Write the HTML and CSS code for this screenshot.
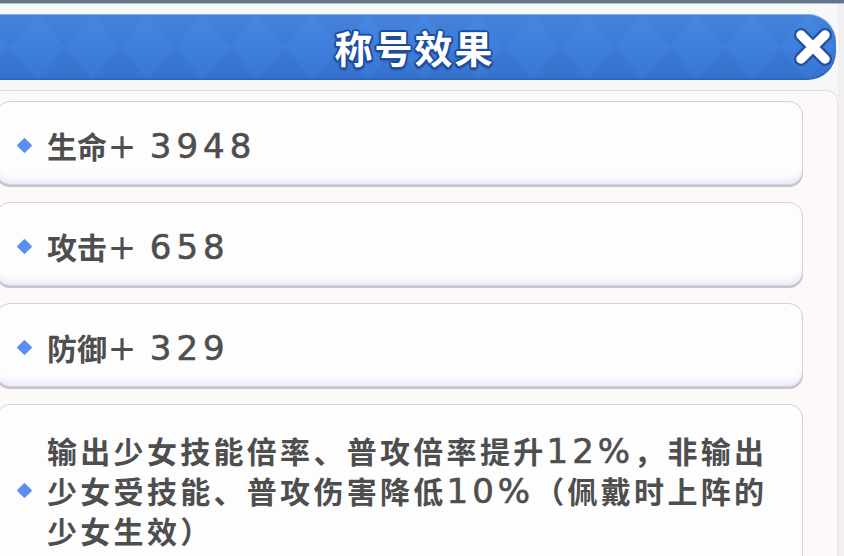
FILE: index.html
```html
<!DOCTYPE html>
<html lang="zh-CN">
<head>
<meta charset="utf-8">
<title>称号效果</title>
<link rel="stylesheet" href="styles.css">
</head>
<body>
<div class="screen">
  <div class="topedge"></div>
  <div class="frame">
    <header class="head">
      <span class="spacer"></span>
      <h1 class="title">称号效果</h1>
      <button class="close" aria-label="关闭">
        <svg width="42" height="42" viewBox="0 0 42 42">
          <g stroke-linecap="round">
            <path d="M9 9 L33 33 M33 9 L9 33" stroke="#24519f" stroke-width="14"/>
            <path d="M9 9 L33 33 M33 9 L9 33" stroke="#ffffff" stroke-width="9.5"/>
          </g>
        </svg>
      </button>
    </header>
    <main class="panel">
      <div class="card">
        <i class="dot"></i>
        <p class="label">生命＋ <span class="num stat">3948</span></p>
      </div>
      <div class="card">
        <i class="dot"></i>
        <p class="label">攻击＋ <span class="num stat">658</span></p>
      </div>
      <div class="card">
        <i class="dot"></i>
        <p class="label">防御＋ <span class="num stat">329</span></p>
      </div>
      <div class="card long">
        <i class="dot"></i>
        <p class="label wide">输出少女技能倍率、普攻倍率提升<span class="num">12%</span>，非输出少女受技能、普攻伤害降低<span class="num">10%</span>（佩戴时上阵的少女生效）</p>
      </div>
    </main>
  </div>
</div>
</body>
</html>
```
FILE: styles.css
```css
html, body {
  margin: 0;
  padding: 0;
}
body {
  width: 844px;
  height: 556px;
  overflow: hidden;
  background: #f1efef;
  font-family: "Noto Sans CJK SC", "Noto Sans", sans-serif;
}
.screen {
  width: 844px;
  height: 556px;
  overflow: hidden;
}
.topedge {
  height: 3px;
  background: #66738f;
  border-bottom: 1px solid #b7bdcc;
}
.frame {
  margin-left: -20px;
  width: 858px;
  background: #f6f7fa;
  padding-top: 10px;
}
.head {
  height: 66px;
  margin-right: 2px;
  border-radius: 0 28px 28px 0;
  display: grid;
  grid-template-columns: 1fr auto 1fr;
  align-items: center;
  padding: 0 2px 0 15px;
  box-sizing: border-box;
  background-color: #3e80dd;
  background-image:
    linear-gradient(180deg, rgba(255,255,255,0.06) 0%, rgba(255,255,255,0) 45%, rgba(10,30,110,0.10) 100%),
    linear-gradient(to bottom right, rgba(20,50,140,0.07) 25%, transparent 25%),
    linear-gradient(to bottom left, rgba(20,50,140,0.07) 25%, transparent 25%),
    linear-gradient(to top right, rgba(20,50,140,0.07) 25%, transparent 25%),
    linear-gradient(to top left, rgba(20,50,140,0.07) 25%, transparent 25%);
  background-size: 100% 100%, 55px 66px, 55px 66px, 55px 66px, 55px 66px;
  background-position: 0 0, 30px 0, 30px 0, 30px 0, 30px 0;
  box-shadow: inset 0 1px 0 rgba(150,200,250,0.7), inset 0 -2px 0 rgba(30,80,170,0.35);
}
.title {
  margin: 0;
  font-size: 38px;
  font-weight: 700;
  line-height: 66px;
  letter-spacing: 2px;
  color: #ffffff;
  text-shadow:
    2px 0 0 #1f4d9c, -2px 0 0 #1f4d9c, 0 2px 0 #1f4d9c, 0 -2px 0 #1f4d9c,
    1.5px 1.5px 0 #1f4d9c, -1.5px 1.5px 0 #1f4d9c, 1.5px -1.5px 0 #1f4d9c, -1.5px -1.5px 0 #1f4d9c,
    0 3px 2px rgba(10,40,100,0.45);
}
.close {
  justify-self: end;
  width: 42px;
  height: 42px;
  padding: 0;
  border: 0;
  background: none;
  display: flex;
}
.panel {
  margin-top: 10px;
  background: #fdf9f9;
  border-top: 1px solid #dcdbe1;
  border-right: 1px solid #e7e4e4;
  border-top-right-radius: 12px;
  padding: 10px 34px 0 16px;
  height: 480px;
  box-sizing: border-box;
}
.card {
  box-sizing: border-box;
  height: 84px;
  margin-bottom: 17px;
  background: #fdfdfe;
  border: 1px solid #d2d2db;
  border-radius: 14px;
  box-shadow: 0 2px 0 #c3c3cb, inset 0 -8px 7px -4px #e9e9f9;
  display: flex;
  align-items: center;
  padding: 5px 20px 0 22px;
}
.card.long {
  height: auto;
  padding: 26px 20px 26px 22px;
}
.dot {
  flex: none;
  width: 11px;
  height: 11px;
  background: #5a8ef0;
  border-radius: 1px;
  transform: rotate(45deg);
  margin-right: 17px;
}
.label {
  margin: 0;
  font-size: 30px;
  line-height: 39px;
  font-weight: 700;
  color: #4e4e4e;
}
.label.wide {
  letter-spacing: 3.3px;
  flex: 1;
}
.num {
  font-family: "DejaVu Sans", "Noto Sans", sans-serif;
  font-weight: 400;
  font-size: 34px;
  letter-spacing: 4px;
  -webkit-text-stroke: 0.6px #4e4e4e;
}
.num.stat {
  margin-left: 6px;
  letter-spacing: 5px;
}
```
